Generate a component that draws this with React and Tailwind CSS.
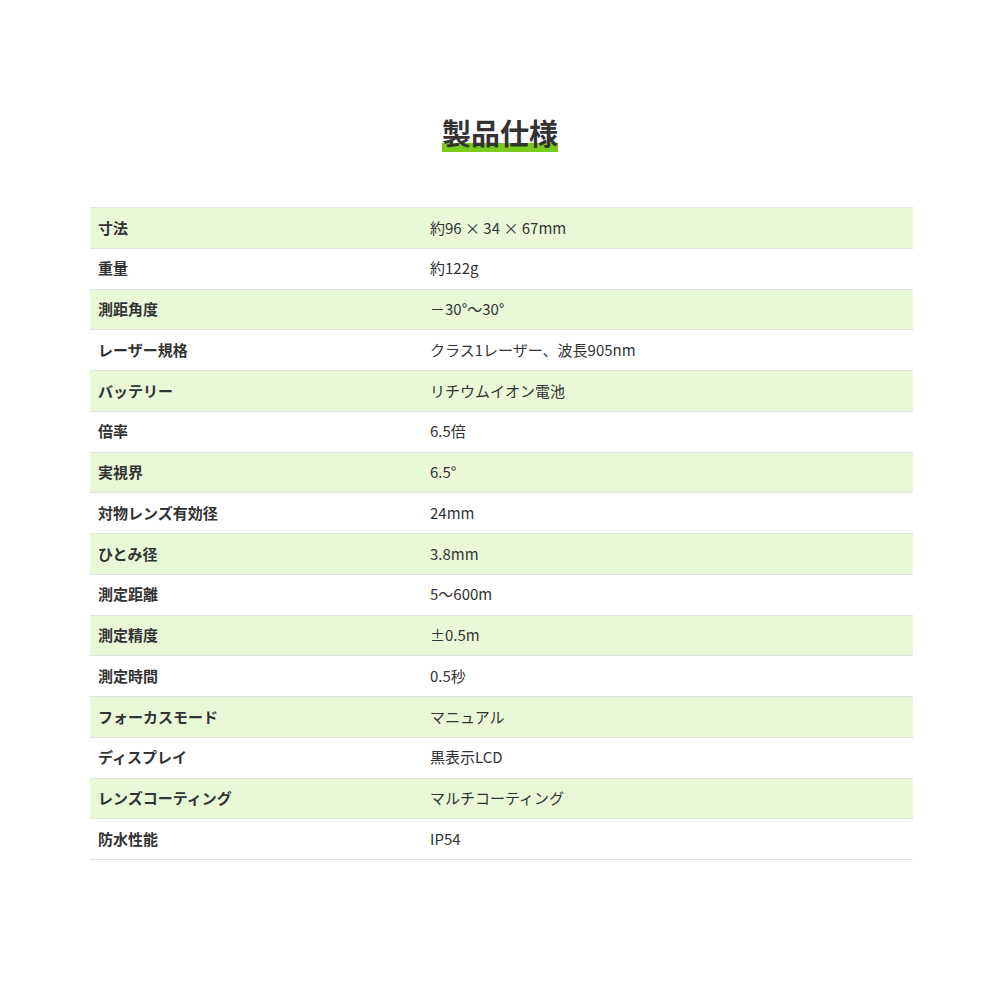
const specs = [
  ['寸法', '約96 × 34 × 67mm'],
  ['重量', '約122g'],
  ['測距角度', '－30°〜30°'],
  ['レーザー規格', 'クラス1レーザー、波長905nm'],
  ['バッテリー', 'リチウムイオン電池'],
  ['倍率', '6.5倍'],
  ['実視界', '6.5°'],
  ['対物レンズ有効径', '24mm'],
  ['ひとみ径', '3.8mm'],
  ['測定距離', '5〜600m'],
  ['測定精度', '±0.5m'],
  ['測定時間', '0.5秒'],
  ['フォーカスモード', 'マニュアル'],
  ['ディスプレイ', '黒表示LCD'],
  ['レンズコーティング', 'マルチコーティング'],
  ['防水性能', 'IP54'],
]

export default function App() {
  return (
    <div
      className="w-[1000px] h-[1000px] bg-white text-[#333]"
      style={{ fontFamily: '"Noto Sans CJK JP", "Noto Sans", sans-serif' }}
    >
      <div className="flex justify-center pt-[111px]">
        <h2 className="relative text-[29px] font-bold leading-[42px] text-[#333]">
          <span className="absolute left-0 right-0 top-[32px] h-[9px] bg-[#7acc1c]" />
          <span className="relative">製品仕様</span>
        </h2>
      </div>
      <div className="mx-[90px] mt-[54px] w-[823px] border-t border-[#e3e8dd]">
        {specs.map(([label, value], i) => (
          <div
            key={label}
            className={`flex h-[40.75px] items-center border-b border-[#e3e3e3] text-[15px] ${i % 2 === 0 ? 'bg-[#e9f9d8]' : 'bg-white'}`}
          >
            <div className="w-[340px] pl-[8px] font-bold">{label}</div>
            <div className="flex-1">{value}</div>
          </div>
        ))}
      </div>
    </div>
  )
}
